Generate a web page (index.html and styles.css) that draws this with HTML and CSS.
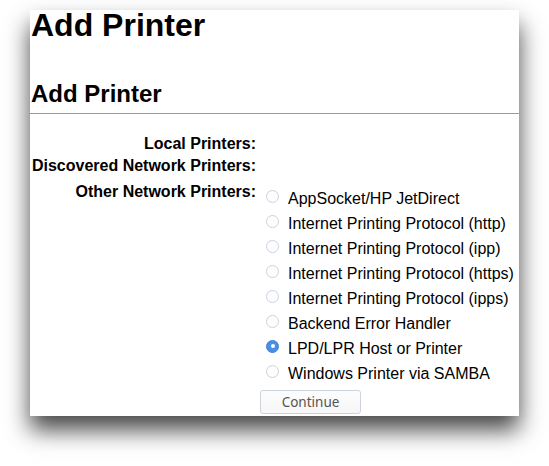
FILE: index.html
```html
<!DOCTYPE html>
<html lang="en">
<head>
<meta charset="utf-8">
<title>Add Printer</title>
<link rel="stylesheet" href="styles.css">
</head>
<body>
<div class="window">
  <h1 class="page-title">Add Printer</h1>
  <h2 class="title">Add Printer</h2>
  <form class="add-form">
    <div class="label">Local Printers:</div>
    <div class="value"></div>
    <div class="label">Discovered Network Printers:</div>
    <div class="value"></div>
    <div class="label label-other">Other Network Printers:</div>
    <div class="value options">
      <label class="opt"><input type="radio" name="device"><span>AppSocket/HP JetDirect</span></label>
      <label class="opt"><input type="radio" name="device"><span>Internet Printing Protocol (http)</span></label>
      <label class="opt"><input type="radio" name="device"><span>Internet Printing Protocol (ipp)</span></label>
      <label class="opt"><input type="radio" name="device"><span>Internet Printing Protocol (https)</span></label>
      <label class="opt"><input type="radio" name="device"><span>Internet Printing Protocol (ipps)</span></label>
      <label class="opt"><input type="radio" name="device"><span>Backend Error Handler</span></label>
      <label class="opt"><input type="radio" name="device" checked><span>LPD/LPR Host or Printer</span></label>
      <label class="opt"><input type="radio" name="device"><span>Windows Printer via SAMBA</span></label>
    </div>
    <div class="label"></div>
    <div class="actions"><button type="button" class="btn">Continue</button></div>
  </form>
</div>
</body>
</html>
```
FILE: styles.css
```css
html, body {
  margin: 0;
  padding: 0;
  background: #ffffff;
}

html {
  min-height: 466px;
}

body {
  font-family: "Liberation Sans", Arial, sans-serif;
  color: #000;
  padding: 10px 0 0 30px;
  min-height: 466px;
  box-sizing: border-box;
}

.window {
  width: 489px;
  height: 406px;
  background: #ffffff;
  box-shadow: 0 14px 22px rgba(0, 0, 0, 0.72);
}

.page-title {
  font-size: 32px;
  font-weight: bold;
  margin: 0 0 0 1px;
  line-height: 30px;
}

.title {
  font-size: 24px;
  font-weight: bold;
  margin: 40px 0 0 0;
  padding: 0 0 5px 1px;
  line-height: 28px;
  border-bottom: 1px solid #999999;
}

.add-form {
  display: grid;
  grid-template-columns: 226px 1fr;
  column-gap: 4px;
  margin-top: 19px;
}

.label {
  font-size: 16px;
  font-weight: bold;
  text-align: right;
  line-height: 22px;
  min-height: 22px;
  white-space: nowrap;
}

.label-other {
  padding-top: 4px;
}

.options {
  display: flex;
  flex-direction: column;
  padding-top: 8.5px;
}

.opt {
  display: flex;
  height: 25px;
  font-size: 16px;
  line-height: 25px;
  white-space: nowrap;
}

.opt input {
  appearance: none;
  -webkit-appearance: none;
  width: 13px;
  height: 13px;
  margin: 4px 9px 0 6px;
  border: 1px solid #cbd2df;
  border-radius: 50%;
  background: #fdfdfe;
  box-sizing: border-box;
  flex: none;
  position: relative;
}

.opt input:checked {
  background: #4a8fe2;
  border-color: #3f82d6;
}

.opt input:checked::after {
  content: "";
  position: absolute;
  left: 50%;
  top: 50%;
  width: 4px;
  height: 4px;
  margin: -2px 0 0 -2px;
  border-radius: 50%;
  background: #ffffff;
}

.actions {
  padding-top: 4px;
}

.btn {
  width: 101px;
  height: 24px;
  margin: 0;
  padding: 0;
  font-family: "Noto Sans", "Open Sans", sans-serif;
  font-size: 13.5px;
  color: #555555;
  background: linear-gradient(#fdfdfd, #f6f6f6);
  border: 1px solid #cdd3dd;
  border-radius: 3px;
}
```
